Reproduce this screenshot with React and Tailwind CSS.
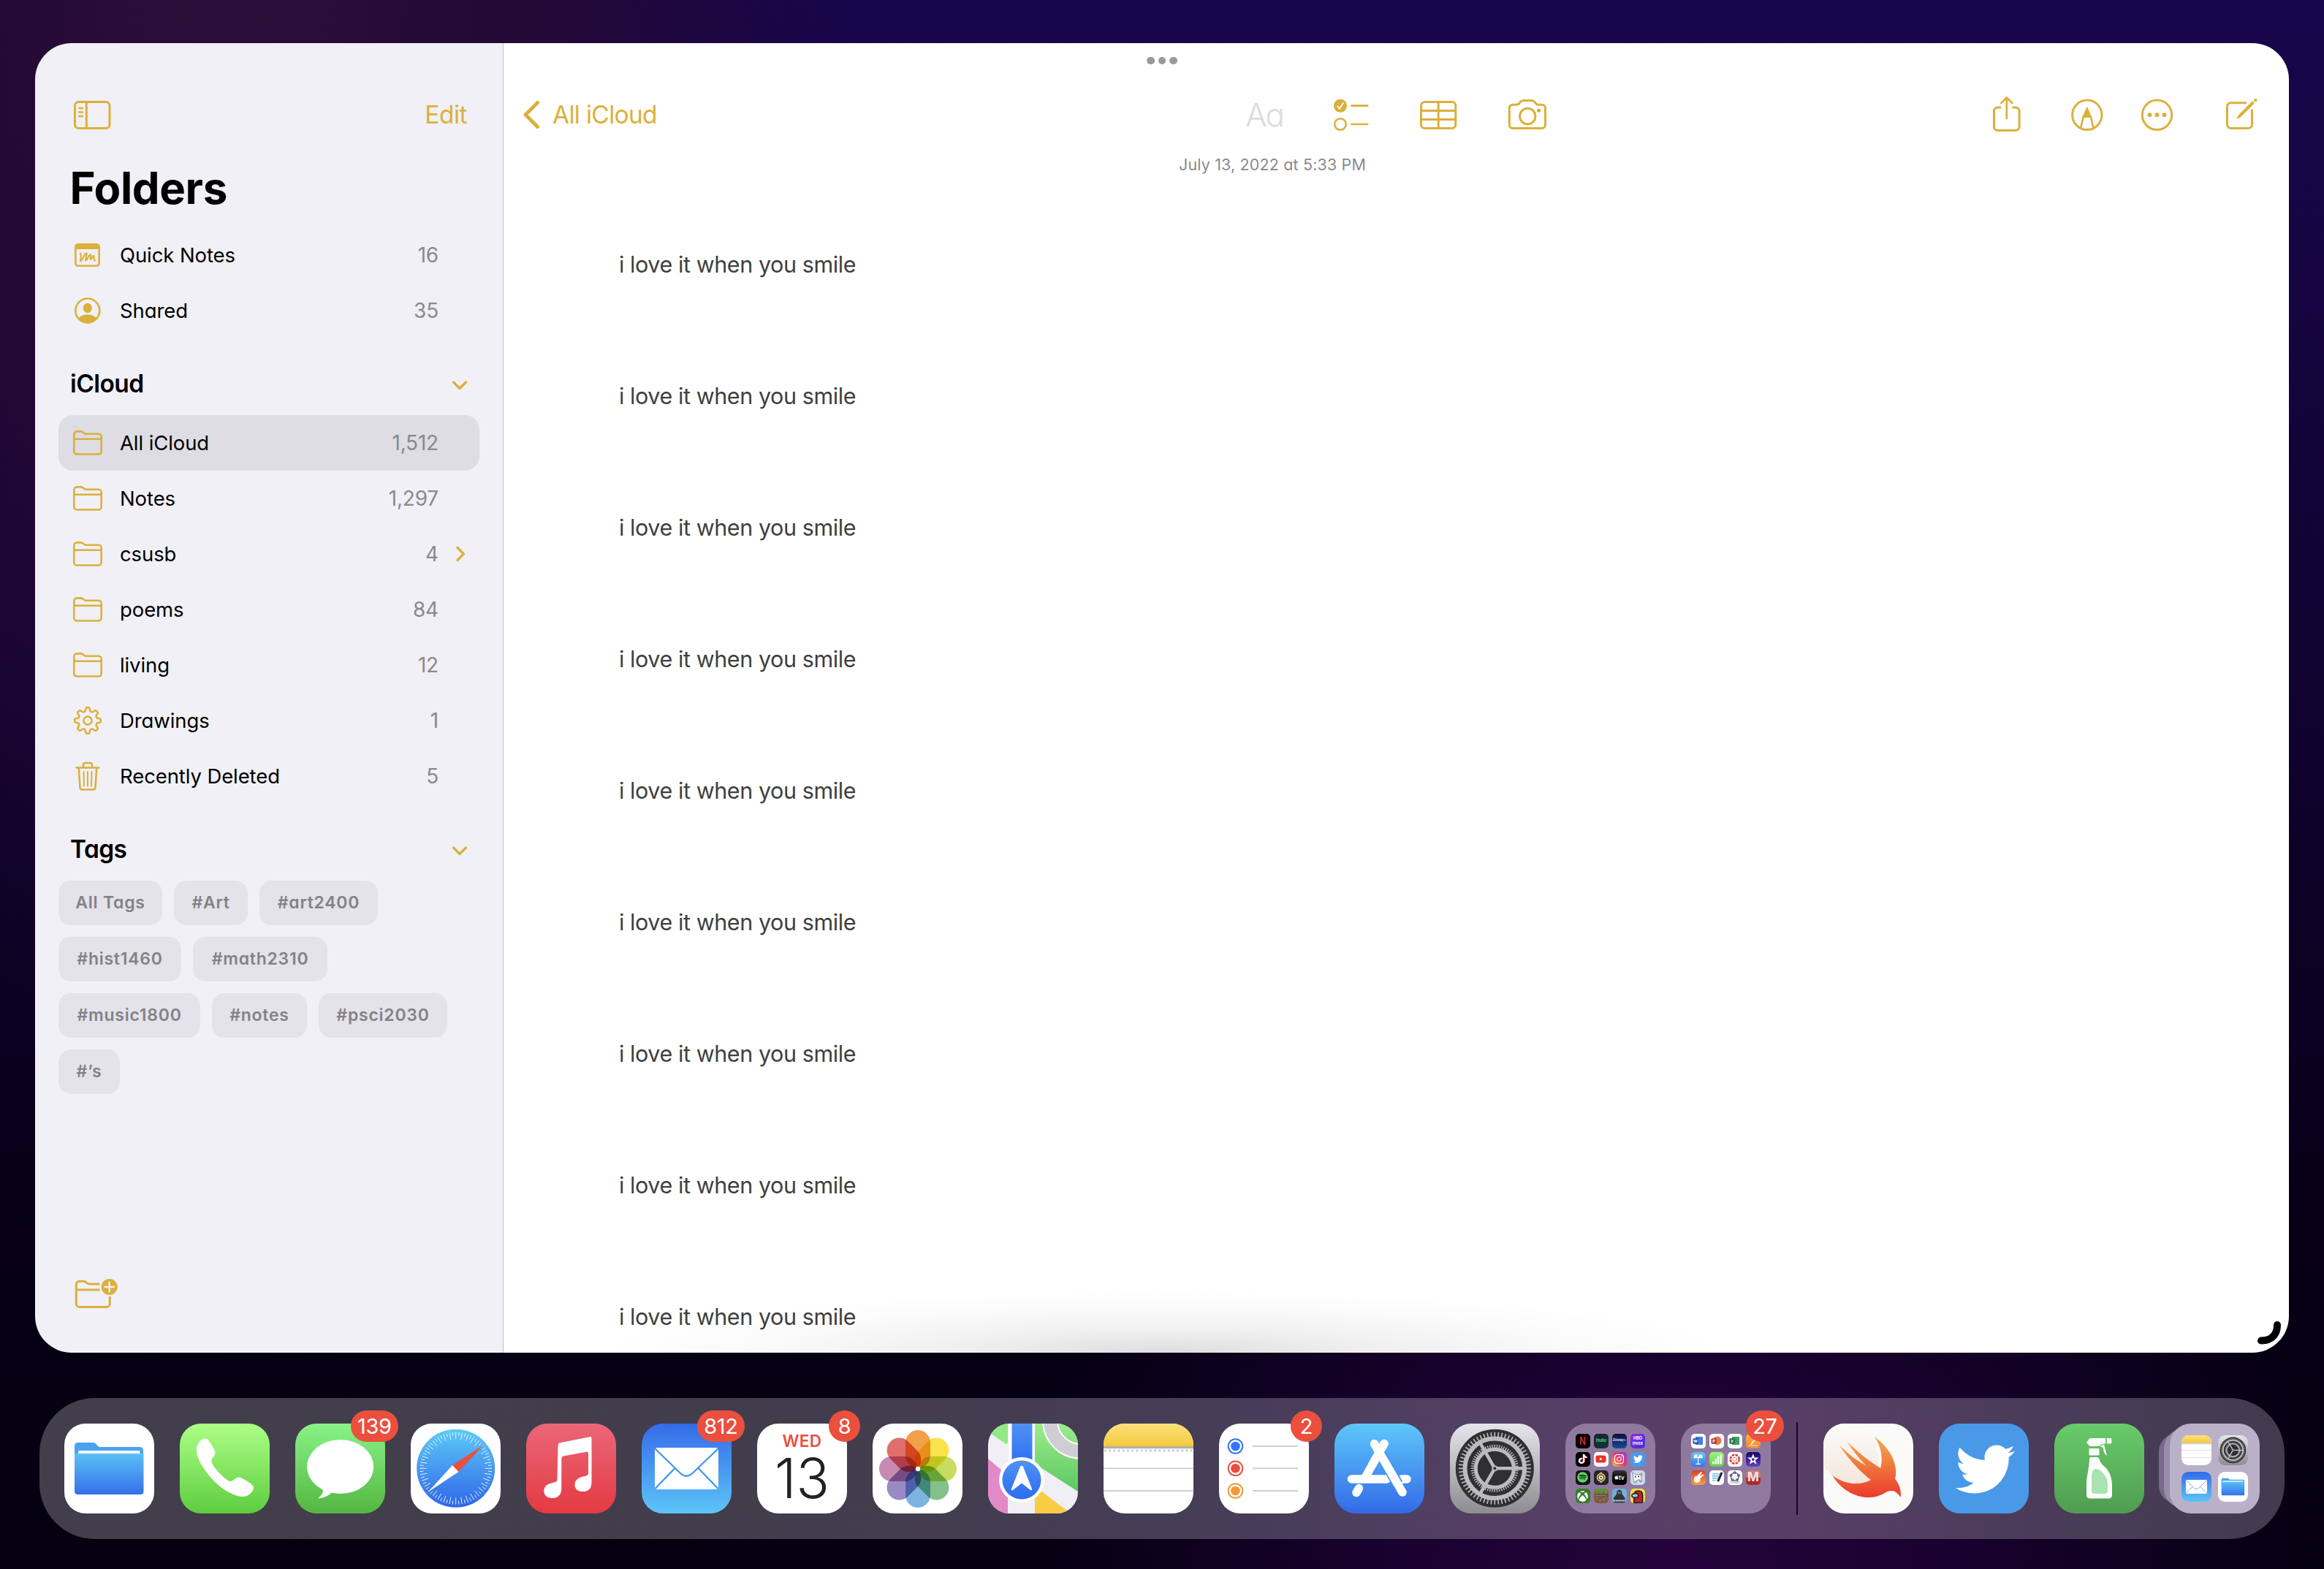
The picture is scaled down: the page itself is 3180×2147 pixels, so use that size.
import React from "react";
import { FaTwitter, FaTiktok, FaYoutube, FaInstagram, FaSpotify, FaXbox, FaApple } from "react-icons/fa";

const GOLD = "#dbb03b";

/* ---------- sidebar glyphs ---------- */

const FolderIcon = () => (
  <svg viewBox="0 0 44 38" className="h-[38px] w-[44px]" fill="none" stroke={GOLD} strokeWidth="2.6" strokeLinejoin="round">
    <path d="M3.3 30.5V7.4a4 4 0 0 1 4-4h5.2c1.6 0 2.4.4 3.5 1.5 1.200 1.300 2 1.900 3.700 1.900h17a4 4 0 0 1 4 4v19.700a4 4 0 0 1-4 4H7.300a4 4 0 0 1-4-4Z" />
    <path d="M3.300 13.700h37.400" />
  </svg>
);

const QuickNoteIcon = () => (
  <svg viewBox="0 0 44 38" className="h-[38px] w-[44px]" fill="none" stroke={GOLD} strokeWidth="2.600" strokeLinecap="round" strokeLinejoin="round">
    <rect x="5.300" y="4.300" width="32.400" height="29.500" rx="3.500" />
    <path d="M5 11V7a3 3 0 0 1 3-3h27a3 3 0 0 1 3 3v4Z" fill={GOLD} stroke="none" />
    <path d="M12 16.500C13.500 19 12.500 24 12.200 27.500C15 26 17 17.500 20.500 16.300C21.500 18 18.500 25 19.200 26.800C21.500 26 23 18.800 26 18.300C27 19.500 24.800 23.500 25.800 25C27.500 25 28.500 20.500 30.300 19.800C31 21.500 29.500 26.800 32.500 26.500" strokeWidth="2.100" />
  </svg>
);

const SharedIcon = () => (
  <svg viewBox="0 0 44 38" className="h-[38px] w-[44px]" fill="none">
    <circle cx="21.800" cy="19" r="16.500" stroke={GOLD} strokeWidth="2.600" />
    <ellipse cx="21.800" cy="15.500" rx="6" ry="6.700" fill={GOLD} />
    <path d="M9.500 30c2.500-4 7-5.400 12.300-5.400S31.600 26 34.100 30a16.500 16.500 0 0 1-24.600 0Z" fill={GOLD} />
  </svg>
);

const gearPath = (() => {
  const pts = [];
  const n = 96;
  for (let i = 0; i < n; i++) {
    const a = (i / n) * Math.PI * 2;
    const w = Math.cos(a * 8);
    const r = 15.4 + 2.500 * Math.tanh(w * 2.600);
    pts.push(`${(22 + r * Math.sin(a)).toFixed(2)} ${(20 - r * Math.cos(a)).toFixed(2)}`);
  }
  return "M" + pts.join("L") + "Z";
})();

const GearIcon = () => (
  <svg viewBox="0 0 44 40" className="h-[40px] w-[44px]" fill="none" stroke={GOLD} strokeWidth="2.500" strokeLinejoin="round">
    <path d={gearPath} />
    <circle cx="22" cy="20" r="5.600" />
  </svg>
);

const TrashIcon = () => (
  <svg viewBox="0 0 44 42" className="h-[42px] w-[44px]" fill="none" stroke={GOLD} strokeWidth="2.600" strokeLinecap="round" strokeLinejoin="round">
    <path d="M6.500 9.500h31M16 9V5.500a2.500 2.500 0 0 1 2.500-2.500h7A2.500 2.500 0 0 1 28 5.500V9" />
    <path d="M9.800 10l1.700 26.500a3 3 0 0 0 3 3h15a3 3 0 0 0 3-3L34.200 10" />
    <path d="M16.500 15l.5 19.500M22 15v19.500M27.500 15l-.5 19.500" strokeWidth="2" />
  </svg>
);

const SidebarToggle = () => (
  <svg viewBox="96 127 60 60" className="h-[60px] w-[60px]" fill="none" stroke={GOLD} strokeWidth="3" strokeLinecap="round">
    <rect x="102.500" y="139.500" width="47.500" height="36" rx="5" />
    <path d="M118.300 140v35" strokeLinecap="butt" />
    <path d="M108 148h5.200M108 153.500h5.200M108 159h5.200" strokeWidth="2.300" />
  </svg>
);

const ChevronDown = () => (
  <svg viewBox="0 0 24 16" className="h-[16px] w-[24px]" fill="none" stroke={GOLD} strokeWidth="3.200" strokeLinecap="round" strokeLinejoin="round">
    <path d="M3.500 4l8.500 8.500L20.500 4" />
  </svg>
);

const ChevronRight = () => (
  <svg viewBox="0 0 16 24" className="h-[24px] w-[16px]" fill="none" stroke={GOLD} strokeWidth="3.200" strokeLinecap="round" strokeLinejoin="round">
    <path d="M4 3.500l8.500 8.500L4 20.500" />
  </svg>
);

const NewFolderIcon = () => (
  <svg viewBox="98 1744 68 52" className="h-[52px] w-[68px]" fill="none" stroke={GOLD} strokeWidth="3" strokeLinejoin="round">
    <path d="M136.500 1757h-14c-1.800 0-2.800-.6-4-1.800-1.400-1.400-2.400-2-4.200-2h-5.500a4.500 4.500 0 0 0-4.500 4.500v26.300a4.500 4.500 0 0 0 4.500 4.500h37a4.500 4.500 0 0 0 4.500-4.500V1774" />
    <path d="M104.500 1765h32" />
    <circle cx="149.700" cy="1761" r="11" fill={GOLD} stroke="none" />
    <path d="M149.700 1754.800v12.400M143.500 1761h12.400" stroke="#f1f0f6" strokeWidth="2.500" strokeLinecap="round" />
  </svg>
);

/* ---------- toolbar glyphs ---------- */

const tool = { fill: "none", stroke: GOLD, strokeWidth: 3, strokeLinecap: "round", strokeLinejoin: "round" };

const BackChevron = () => (
  <svg viewBox="712 127 30 60" className="ml-[23px] h-[60px] w-[30px]" {...tool} strokeWidth="5">
    <path d="M735.500 140.500L719 157l16.500 16.500" />
  </svg>
);

const ChecklistIcon = () => (
  <svg viewBox="1820 127 60 60" className="ml-[60px] h-[60px] w-[60px]" {...tool}>
    <circle cx="1834" cy="144.700" r="9.100" fill={GOLD} stroke="none" />
    <path d="M1830.300 145.500l2.700 3.200 4.800-7.500" stroke="#fff" strokeWidth="1.900" />
    <circle cx="1834" cy="170" r="7.800" strokeWidth="2.600" />
    <path d="M1849.300 144.700h22M1849.300 170h22" strokeWidth="2.700" />
  </svg>
);

const TableIcon = () => (
  <svg viewBox="1938 127 60 60" className="ml-[58px] h-[60px] w-[60px]" {...tool}>
    <rect x="1944.500" y="139.500" width="47.300" height="36" rx="5" />
    <path d="M1945 151.500h46.500M1945 163.500h46.500M1968.200 140v35" />
  </svg>
);

const CameraIcon = () => (
  <svg viewBox="2058 127 64 60" className="ml-[60px] h-[60px] w-[64px]" {...tool}>
    <path d="M2065.300 148a4.800 4.800 0 0 1 4.800-4.800h5.200c1.700 0 2.700-.6 3.800-2l1.300-1.700c1.100-1.400 2.200-2 4-2h11.400c1.800 0 2.900.6 4 2l1.300 1.700c1.100 1.400 2.100 2 3.800 2h4.800a4.800 4.800 0 0 1 4.800 4.800v22.700a4.800 4.800 0 0 1-4.800 4.800h-39.600a4.800 4.800 0 0 1-4.800-4.800Z" />
    <circle cx="2090.200" cy="159" r="10.700" />
    <circle cx="2105.500" cy="151.200" r="2.600" fill={GOLD} stroke="none" />
  </svg>
);

const ShareIcon = () => (
  <svg viewBox="2720 127 52 60" className="ml-[598px] h-[60px] w-[52px]" {...tool}>
    <path d="M2738 147h-4.500a5 5 0 0 0-5 5v21.500a5 5 0 0 0 5 5h24.600a5 5 0 0 0 5-5V152a5 5 0 0 0-5-5h-4.600" strokeLinecap="butt" />
    <path d="M2745.800 162v-28M2738.300 141l7.500-7.500 7.500 7.500" strokeWidth="2.700" />
  </svg>
);

const MarkupIcon = () => (
  <svg viewBox="2830 127 52 60" className="ml-[58px] h-[60px] w-[52px]" {...tool}>
    <circle cx="2855.800" cy="157.300" r="20.200" />
    <path d="M2855.800 147.500l-5.500 12.500h11Z" fill={GOLD} strokeWidth="1.800" />
    <path d="M2850.500 160l-3.300 15M2861 160l3.300 15" strokeWidth="2.600" />
  </svg>
);

const MoreIcon = () => (
  <svg viewBox="2925 127 52 60" className="ml-[43px] h-[60px] w-[52px]" {...tool}>
    <circle cx="2951.500" cy="157.300" r="20.200" />
    <g fill={GOLD} stroke="none">
      <circle cx="2941.500" cy="157.300" r="3" />
      <circle cx="2951.500" cy="157.300" r="3" />
      <circle cx="2961.500" cy="157.300" r="3" />
    </g>
  </svg>
);

const ComposeIcon = () => (
  <svg viewBox="3040 127 54 60" className="ml-[63px] h-[60px] w-[54px]" {...tool}>
    <path d="M3074 140.700h-21.500a5 5 0 0 0-5 5v24.800a5 5 0 0 0 5 5h24a5 5 0 0 0 5-5v-21" strokeLinecap="butt" />
    <path d="M3061 162.300l1.600-4.600 19.400-19.500 3 3-19.500 19.500Z" fill={GOLD} stroke="none" />
    <path d="M3061 162.300l3-1.600" strokeWidth="1.200" />
    <circle cx="3086.200" cy="137.200" r="2.200" fill={GOLD} stroke="none" />
  </svg>
);

/* ---------- dock icons ---------- */

const ring = (n, r1, r2, cx, cy, extra) =>
  Array.from({ length: n }, (_, i) => {
    const a = (i / n) * Math.PI * 2;
    const inner = extra && i % 2 ? r1 + extra : r1;
    return (
      <line
        key={i}
        x1={cx + inner * Math.sin(a)}
        y1={cy - inner * Math.cos(a)}
        x2={cx + r2 * Math.sin(a)}
        y2={cy - r2 * Math.cos(a)}
      />
    );
  });

const Svg = ({ children }) => (
  <svg viewBox="0 0 123 123" className="block h-full w-full">
    {children}
  </svg>
);

const Grad = ({ id, a, b }) => (
  <linearGradient id={id} x1="0" y1="0" x2="0" y2="1">
    <stop offset="0" stopColor={a} />
    <stop offset="1" stopColor={b} />
  </linearGradient>
);

const Files = () => (
  <Svg>
    <defs><Grad id="files" a="#5ac0f6" b="#3570e8" /></defs>
    <rect width="123" height="123" fill="#fff" />
    <path d="M14 60V31q0-5 5-5h20q3 0 4.500 2l2.500 3q1 1 3 1h54q5 0 5 5v25Z" fill="#4ba3ef" />
    <rect x="19" y="37" width="84.500" height="6" rx="2" fill="#fff" />
    <path d="M14 41h94.500v51.500q0 4.500-4.500 4.500H18.500q-4.500 0-4.500-4.500Z" fill="url(#files)" />
    <path d="M19 41h84.500" stroke="#a9d9f8" strokeWidth="1.200" />
  </Svg>
);

const Phone = () => (
  <Svg>
    <defs><Grad id="phone" a="#acfe86" b="#5ecd3f" /></defs>
    <rect width="123" height="123" fill="url(#phone)" />
    <path d="M38 21.500C42 26 46 33 48.200 38C50 44 42.500 47 43.300 52.500C46 60 58 73 67 78.500C72.500 81 76 72.500 82 73.500C88 76 97 81 100.500 85.500C103 91 95 99 88.500 99.800C80 101 66 95 55 86C38 72 23 50 22.800 36C23 27 31 17 38 21.500Z" fill="#fff" />
  </Svg>
);

const Messages = () => (
  <Svg>
    <defs><Grad id="msg" a="#88f388" b="#55b641" /></defs>
    <rect width="123" height="123" fill="url(#msg)" />
    <ellipse cx="61.700" cy="59" rx="45.500" ry="37" fill="#fff" />
    <path d="M36 87c3 4 3 8.500-4 14.300 0 1 .5 1.200 2 .9 7-1.200 11-3.700 15.500-7.200Z" fill="#fff" />
  </Svg>
);

const Safari = () => (
  <Svg>
    <defs><Grad id="saf" a="#5dcaf8" b="#2f66e8" /></defs>
    <rect width="123" height="123" fill="#fff" />
    <circle cx="61.700" cy="61.300" r="53.500" fill="url(#saf)" />
    <g stroke="#e8f4fd" strokeWidth="1">{ring(72, 40, 49.500, 61.700, 61.300, 4.500)}</g>
    <path d="M99.500 29.500L57 57l8.500 9Z" fill="#eb4f3e" />
    <path d="M24 93.500L57 57l8.500 9Z" fill="#fff" />
  </Svg>
);

const Music = () => (
  <Svg>
    <defs><Grad id="mus" a="#ea6778" b="#e43a42" /></defs>
    <rect width="123" height="123" fill="url(#mus)" />
    <path d="M43.500 30q0-3 3-3.700L87 18.200q2.500-.5 2.500 2V80c0 9-4 12.500-11 13-7 .5-12-3-12-9 0-7 5-10 11-11.500 5-1 7.500-1.500 7.500-5V41q0-3-3-2.300l-31 5.800q-2.700.6-2.700 3V88c0 9.500-4.500 13.500-12 14-7 .3-12-3.500-12-9.500 0-7 5-10 11-11.300 5-1 7.200-1.700 7.200-5.200Z" fill="#fff" />
  </Svg>
);

const Mail = () => (
  <Svg>
    <defs><Grad id="mail" a="#346be8" b="#5dc5f8" /></defs>
    <rect width="123" height="123" fill="url(#mail)" />
    <rect x="18" y="33" width="87" height="57" rx="4" fill="#fff" />
    <g fill="none" stroke="#4596f0" strokeWidth="2.300">
      <path d="M18.500 34.500l34.500 33.500q8 7.500 16.500 0L104.500 34.500" />
      <path d="M19 88.500L45.500 61M104 88.500L77.500 61" />
    </g>
  </Svg>
);

const Calendar = () => (
  <div className="flex h-full w-full flex-col items-center bg-white">
    <div className="mt-[10px] h-[28px] text-[22.500px] leading-[28px] font-semibold tracking-[0.4px] text-[#ea4f45]">WED</div>
    <div className="mt-[3px] h-[68px] text-[75px] leading-[68px] font-light text-[#222]">13</div>
  </div>
);

const petals = ["#f0a14a", "#f8e34b", "#c8dc62", "#84c08c", "#7db3df", "#9a8ac3", "#c78ab2", "#e26e6c"];
const Photos = () => (
  <Svg>
    <rect width="123" height="123" fill="#fff" />
    {petals.map((c, i) => (
      <rect key={c} x="45" y="9" width="34" height="52" rx="17" fill={c} className="mix-blend-multiply" transform={`rotate(${i * 45} 62 62)`} />
    ))}
    <circle cx="62" cy="62" r="3.200" fill="#fff" />
  </Svg>
);

const Maps = () => (
  <Svg>
    <defs>
      <Grad id="mapg" a="#9dec8b" b="#5cc861" />
      <Grad id="mapb" a="#4f92f2" b="#2b6cf3" />
    </defs>
    <rect width="123" height="123" fill="#f0eff5" />
    <path d="M0 0h27v24q0 6-4 3L0 11Z" fill="#94e885" />
    <path d="M64 0h59v93L64 55Z" fill="url(#mapg)" />
    <circle cx="127" cy="-4" r="42" fill="none" stroke="#fff" strokeWidth="22" />
    <circle cx="127" cy="-4" r="42" fill="none" stroke="#cfced4" strokeWidth="18" />
    <rect x="28.500" width="35" height="60" fill="#fff" />
    <rect x="32.500" width="28" height="60" fill="url(#mapb)" />
    <path d="M0 48l27 23v52H0Z" fill="#e289c7" />
    <path d="M64 86l44 33-4 4H64Z" fill="#f6cd45" />
    <circle cx="46" cy="77" r="31" fill="#fff" />
    <circle cx="46" cy="77" r="26.500" fill="url(#mapb)" />
    <path d="M46 57.500c1.200 0 1.800.8 2.300 2.200L60 89c.6 2-.8 3-2.300 1.800L46 81.500 34.300 90.800C32.800 92 31.400 91 32 89l11.700-29.300c.5-1.400 1.100-2.200 2.300-2.200Z" fill="#fff" />
  </Svg>
);

const Notes = () => (
  <Svg>
    <defs><Grad id="note" a="#fbe17c" b="#f5c93d" /></defs>
    <rect width="123" height="123" fill="#fff" />
    <rect width="123" height="31" fill="url(#note)" />
    <rect y="31" width="123" height="3.200" fill="#b3b0a9" />
    <path d="M1 37h122" stroke="#c9c9ce" strokeWidth="2.800" strokeDasharray="2.800 3.400" />
    <path d="M0 61.300h123M0 92h123" stroke="#cfced4" strokeWidth="1.800" />
  </Svg>
);

const Reminders = () => (
  <Svg>
    <rect width="123" height="123" fill="#fff" />
    {[["#3478f6", 31], ["#eb4e3d", 61.300], ["#f19a37", 92]].map(([c, y]) => (
      <g key={c}>
        <circle cx="22.500" cy={y} r="9.800" fill="none" stroke={c} strokeWidth="2" />
        <circle cx="22.500" cy={y} r="6.300" fill={c} />
        <path d={`M46 ${y}H108`} stroke="#cfced4" strokeWidth="2" />
      </g>
    ))}
  </Svg>
);

const AppStore = () => (
  <Svg>
    <defs><Grad id="as" a="#5ec7f9" b="#336ae8" /></defs>
    <rect width="123" height="123" fill="url(#as)" />
    <g stroke="#fff" strokeWidth="11.500" strokeLinecap="round" fill="none">
      <path d="M68 27.500L41 75.500M33.500 88.500L30 94.500" />
      <path d="M23.500 76h48M92 76h7" />
    </g>
    <path d="M55 27.500L93 94" stroke="#4a97f1" strokeWidth="15" strokeLinecap="butt" fill="none" strokeDasharray="50 100" strokeDashoffset="-14" />
    <path d="M54.500 27.500L93 94" stroke="#fff" strokeWidth="11.500" strokeLinecap="round" />
    <path d="M68 27.500L52 56" stroke="#fff" strokeWidth="11.500" strokeLinecap="round" />
  </Svg>
);

const Settings = () => (
  <Svg>
    <defs><Grad id="set" a="#e5e5ea" b="#8d8d91" /></defs>
    <rect width="123" height="123" fill="url(#set)" />
    <circle cx="61.300" cy="61.300" r="53.500" fill="#303032" />
    <circle cx="61.300" cy="61.300" r="40.800" fill="none" stroke="#bcbcc0" strokeWidth="6" />
    <g stroke="#bcbcc0" strokeWidth="1.700">{ring(60, 42, 49.500, 61.300, 61.300)}</g>
    <circle cx="61.300" cy="61.300" r="26" fill="none" stroke="#bcbcc0" strokeWidth="5" />
    <g stroke="#bcbcc0" strokeWidth="1.400">{ring(60, 27, 32.500, 61.300, 61.300)}</g>
    <g stroke="#bcbcc0" strokeWidth="4.500">
      <path d="M61.300 61.300H101M61.300 61.300L41.500 27M61.300 61.300L41.500 95.600" />
    </g>
    <circle cx="61.300" cy="61.300" r="4" fill="#bcbcc0" />
    <circle cx="61.300" cy="61.300" r="2" fill="#303032" />
  </Svg>
);

const Swift = () => (
  <Svg>
    <defs>
      <Grad id="sw" a="#f2b04d" b="#eb3a2c" />
      <Grad id="swb" a="#fdfbfa" b="#f3e7dd" />
    </defs>
    <rect width="123" height="123" fill="#fafaf9" />
    <path d="M0 0h52l18 18L78 61 65 77C50 86 30 84 12 71L0 58Z" fill="url(#swb)" />
    <path d="M70 18C92 34 103 56 98 76C104 82 107 93 105.500 101C101 92 92 89 84 95C75 100 68 101 62 101C41 101 22 88 12.400 71C30 84 50 85 65 77C50 66 34 48 21.400 29C33 41 46 51 59 58C50 49 40 37 32.500 25C46 38 62 51 78 61C82 47 79 32 70 18Z" fill="url(#sw)" />
  </Svg>
);

const Twitter = () => (
  <div className="flex h-full w-full items-center justify-center bg-[#4a99e9] pt-[2px] pl-[3px]">
    <FaTwitter className="h-[81px] w-[81px] text-white" />
  </div>
);

const Spray = () => (
  <Svg>
    <defs><Grad id="spr" a="#69cb6b" b="#4f9c50" /></defs>
    <rect width="123" height="123" fill="url(#spr)" />
    <g fill="#fff">
      <path d="M44 26l4-5.500q.5-.5 1.500-.5H70v7.500q-6 0-8 3.500H48.500Z" />
      <rect x="71.800" y="20" width="6.500" height="7.500" rx="1" />
      <path d="M63 31l5-2.500 4 15.500q-5-3-5-10.500Z" />
      <rect x="47.500" y="34" width="14" height="9.500" rx="1" />
      <path d="M48 48q0-2 2-2h9q2 0 2.500 2.500c1 6 6 8.500 10.500 14 5 6.500 7 13.500 7 23v12q0 5-5 5H49q-5 0-5-5V82c0-10 4-22 4-34Z" />
    </g>
    <path d="M51 74c0-8 2-12 6-12 5 0 16 9 16 21v9q0 4-4 4H55q-4 0-4-4Z" fill="#a9e4b0" />
  </Svg>
);

/* Tiny tiles shown inside folders */
const Tile = ({ className, children }) => (
  <div className={`flex h-[19.500px] w-[19.500px] items-center justify-center overflow-hidden rounded-[5px] ${className}`}>{children}</div>
);

const Mini = ({ children }) => (
  <svg viewBox="0 0 20 20" className="h-full w-full">
    {children}
  </svg>
);

const Office = ({ letter, a, b, round }) => (
  <Tile className="bg-white">
    <Mini>
      {round ? <circle cx="11" cy="9.700" r="6" fill={b} /> : <rect x="6" y="4" width="10.500" height="11.500" rx="1" fill={b} />}
      <rect x="2.500" y="6.500" width="7.500" height="7.500" rx="1" fill={a} />
      <text x="6.250" y="12.300" fontSize="5.500" fontWeight="700" textAnchor="middle" fill="#fff">{letter}</text>
    </Mini>
  </Tile>
);

const Entertainment = () => (
  <div className="grid h-full w-full grid-cols-[repeat(4,19.500px)] content-start gap-[5.600px] bg-[#8f799f] p-[14px]">
    <Tile className="bg-black"><span className="scale-x-75 text-[15px] font-bold text-[#d9222a]">N</span></Tile>
    <Tile className="bg-linear-to-br from-[#16202c] to-[#0f3a3a]"><span className="text-[6.500px] font-bold text-[#3ddc84]">hulu</span></Tile>
    <Tile className="bg-linear-to-b from-[#0b0f3c] to-[#1a4a9c]"><span className="text-[4.500px] font-semibold text-white italic">Disney+</span></Tile>
    <Tile className="flex-col bg-linear-to-br from-[#8b2be0] to-[#3c2bd8] text-center text-white">
      <span className="text-[5.500px] leading-[6px] font-bold">HBO</span>
      <span className="text-[7px] leading-[7px] font-semibold">max</span>
    </Tile>
    <Tile className="bg-black"><FaTiktok className="h-[13px] w-[13px] text-white drop-shadow-[1px_0_0_#e8405a]" /></Tile>
    <Tile className="bg-white"><FaYoutube className="h-[15px] w-[15px] text-[#ea3323]" /></Tile>
    <Tile className="bg-linear-to-tr from-[#f9b13a] via-[#e8306a] to-[#8a2fd6]"><FaInstagram className="h-[15px] w-[15px] text-white" /></Tile>
    <Tile className="bg-[#4a99e9]"><FaTwitter className="h-[13px] w-[13px] text-white" /></Tile>
    <Tile className="bg-[#151515]"><FaSpotify className="h-[15px] w-[15px] text-[#5fd36a]" /></Tile>
    <Tile className="bg-[#23262b]">
      <Mini>
        <circle cx="10" cy="10" r="5.300" fill="none" stroke="#f0c26a" strokeWidth="1.800" />
        <circle cx="10" cy="10" r="3.200" fill="#fff" />
        <circle cx="10" cy="10" r="1.300" fill="#333" />
        <path d="M10 2.500v2.500M10 15v2.500" stroke="#f0b23a" strokeWidth="2.500" />
      </Mini>
    </Tile>
    <Tile className="bg-linear-to-b from-[#333] to-black text-white">
      <FaApple className="h-[7px] w-[6px]" /><span className="text-[8px] font-semibold">tv</span>
    </Tile>
    <Tile className="bg-[#c8daf2]">
      <Mini>
        <path d="M3 3l4 3h5l4-2-1 6 1 6h-3l-1-3-3 1-1 3H5l-1-6Z" fill="#f7f7fa" stroke="#6a6a78" strokeWidth=".7" />
        <circle cx="7" cy="9" r="1" fill="#333" /><circle cx="11.500" cy="8.500" r="1" fill="#333" />
        <path d="M14 5l1 3M6 15l2 1M13 13l2 3" stroke="#b5483c" strokeWidth="1" />
      </Mini>
    </Tile>
    <Tile className="bg-[#357d2b]"><FaXbox className="h-[15px] w-[15px] text-white" /></Tile>
    <Tile className="bg-[#7d5a41]">
      <Mini>
        <path d="M0 0h20v5h-2v2h-3V5h-3v3H9V5H6v2H3V5H0Z" fill="#5e8f38" />
        <path d="M3 12h2v2H3ZM12 14h3v2h-3ZM8 16h2v2H8ZM16 11h2v2h-2Z" fill="#a57c5c" />
        <rect x="1.500" y="8.500" width="17" height="3" fill="#4a4a4a" />
        <path d="M2.500 10h15" stroke="#b9b9b9" strokeWidth="1.200" strokeDasharray="1.500 .6" />
      </Mini>
    </Tile>
    <Tile className="bg-[#6fb1d8]">
      <Mini>
        <path d="M7 3q3-2.500 6 0l1 5 4 5v7H2v-7l4-5Z" fill="#30353c" />
        <path d="M8 4.500q2-1 4 0v3H8Z" fill="#6c737b" />
        <path d="M2 17h16" stroke="#e5e5e5" strokeWidth="2" strokeDasharray="2 .7" />
      </Mini>
    </Tile>
    <Tile className="bg-[#f5dc43]">
      <Mini>
        <path d="M5 20V9q0-6 6-6t6 6v11Z" fill="#b5282b" stroke="#1c1216" strokeWidth="1.600" />
        <rect x="2" y="7" width="9" height="5.500" rx="2.700" fill="#9cc7dc" stroke="#1c1216" strokeWidth="1.400" />
      </Mini>
    </Tile>
  </div>
);

const Productivity = () => (
  <div className="grid h-full w-full grid-cols-[repeat(4,19.500px)] content-start gap-[5.600px] bg-[#8f799f] p-[14px]">
    <Office letter="W" a="#2150a8" b="#3f82dc" />
    <Office letter="P" a="#b8412a" b="#e07a55" round />
    <Office letter="X" a="#1f6b41" b="#3fa068" />
    <Tile className="bg-linear-to-b from-[#f5b13d] to-[#ee8a3a]"><Mini><path d="M7 15L16 4" stroke="#fff" strokeWidth="1.600" /><path d="M4 16.500h12" stroke="#fff" strokeWidth=".9" /></Mini></Tile>
    <Tile className="bg-linear-to-b from-[#62c5f8] to-[#3577ea]"><Mini><path d="M4.500 3.500h11l1 5h-13Z" fill="#fff" /><path d="M10 8v8.500M6.500 16.800h7" stroke="#fff" strokeWidth="1.200" /><circle cx="10" cy="5.500" r="1.500" fill="#7fc26a" /></Mini></Tile>
    <Tile className="bg-linear-to-b from-[#9df57f] to-[#5fd048]"><Mini><path d="M5.200 17v-4M8.800 17V9.500M12.400 17V6M16 17V3.500" stroke="#fff" strokeWidth="2.400" /></Mini></Tile>
    <Tile className="bg-white"><Mini><circle cx="10" cy="10" r="6.200" fill="none" stroke="#d23a33" strokeWidth="2.600" strokeDasharray="3.600 1.270" /><circle cx="10" cy="10" r="2.800" fill="none" stroke="#d23a33" strokeWidth="1.200" strokeDasharray="1.200 1" /></Mini></Tile>
    <Tile className="bg-linear-to-b from-[#140a63] to-[#6a3cc0]"><Mini><path d="M10 2l2 5.600 6 .2-4.800 3.600 1.700 5.800L10 13.800l-4.900 3.400 1.700-5.800L2 7.800l6-.2Z" fill="#fff" /><circle cx="10" cy="10.300" r="1.900" fill="#3d22a0" /></Mini></Tile>
    <Tile className="bg-linear-to-b from-[#dc3b30] to-[#f2a044]"><Mini><path d="M7 9l7-7 1.500 1-4 5.500L17 5.500l.7 1.500-5.200 4.500c1 3-1 6-4.500 6S3.500 14.500 4 11l2-3Z" fill="#fff" /></Mini></Tile>
    <Tile className="bg-white"><Mini><path d="M4 5h11M4 8h9M4 11h8M4 14h5" stroke="#5cb9ea" strokeWidth="1.400" /><path d="M12 15.500L17.500 3" stroke="#222" strokeWidth="3" /></Mini></Tile>
    <Tile className="bg-white">
      <Mini>
        <circle cx="10" cy="8.800" r="5.600" fill="none" stroke="#555" strokeWidth="1.200" />
        <g fill="#6a66c9" stroke="#333" strokeWidth=".5">
          <circle cx="10" cy="3.200" r="1.700" /><circle cx="15.300" cy="7.200" r="1.700" /><circle cx="13.300" cy="13.400" r="1.700" /><circle cx="6.700" cy="13.400" r="1.700" /><circle cx="4.700" cy="7.200" r="1.700" />
        </g>
        <text x="10" y="18.800" fontSize="3.400" textAnchor="middle" fill="#666">CLASSIC</text>
      </Mini>
    </Tile>
    <Tile className="bg-linear-to-b from-[#d07672] from-50% to-[#b02a26] to-50%"><span className="text-[17px] leading-none font-bold text-[#f3e3e3]">M</span></Tile>
  </div>
);

const StackTile = ({ children }) => <div className="h-[41px] w-[41px] overflow-hidden rounded-[9.500px]">{children}</div>;

const AppLibrary = () => (
  <div className="relative h-[123px] w-[123px]">
    <div className="absolute top-[14px] -left-[15px] h-[95px] w-[95px] rounded-[24px] bg-[#78698c]" />
    <div className="absolute top-[7px] -left-[8px] h-[109px] w-[109px] rounded-[27px] bg-[#988bab]" />
    <div className="relative grid h-full w-full grid-cols-2 content-start gap-[8.500px] rounded-[29px] bg-[#bab1c9] p-[16.300px]">
      <StackTile><Notes /></StackTile>
      <StackTile><Settings /></StackTile>
      <StackTile><Mail /></StackTile>
      <StackTile><Files /></StackTile>
    </div>
  </div>
);

const DockApp = ({ icon: Icon, badge }) => (
  <div className="relative h-[123px] w-[123px]">
    <div className="isolate h-full w-full overflow-hidden rounded-[29px]">
      <Icon />
    </div>
    {badge && (
      <div className="absolute -top-[18px] -right-[18px] flex h-[43px] min-w-[43px] items-center justify-center rounded-full bg-[#eb4f3d] px-[9.500px] text-[29px] leading-none tracking-[-0.4px] text-white">
        {badge}
      </div>
    )}
  </div>
);

const mainApps = [
  { icon: Files },
  { icon: Phone },
  { icon: Messages, badge: "139" },
  { icon: Safari },
  { icon: Music },
  { icon: Mail, badge: "812" },
  { icon: Calendar, badge: "8" },
  { icon: Photos },
  { icon: Maps },
  { icon: Notes },
  { icon: Reminders, badge: "2" },
  { icon: AppStore },
  { icon: Settings },
  { icon: Entertainment },
  { icon: Productivity, badge: "27" },
];

const recentApps = [{ icon: Swift }, { icon: Twitter }, { icon: Spray }];

const Dock = () => (
  <div className="mt-[62px] ml-[54px] flex h-[193px] w-[3072px] items-center gap-[35px] rounded-[76px] bg-[linear-gradient(90deg,#423e4b_0%,#423d4c_35%,#463d57_52%,#563f66_68%,#573e66_78%,#4a3c59_89%,#433a4f_100%)] pl-[34px]">
    {mainApps.map((app, i) => (
      <DockApp key={i} {...app} />
    ))}
    <div className="h-[127px] w-[2px] bg-[#14052c]" />
    {recentApps.map((app, i) => (
      <DockApp key={i} {...app} />
    ))}
    <AppLibrary />
  </div>
);

/* ---------- sidebar ---------- */

const Row = ({ icon, label, count, selected, expandable }) => (
  <div className={`mx-[32px] flex h-[76px] items-center rounded-[20px] pr-[16px] pl-[18px] ${selected ? "bg-[#dedde3]" : ""}`}>
    <div className="flex w-[44px] justify-center">{icon}</div>
    <div className="ml-[22px] flex-1 pt-[1px] text-[27.500px] tracking-[-0.1px] text-black">{label}</div>
    <div className="text-[28px] tracking-[-0.2px] text-[#89898e]">{count}</div>
    <div className="flex w-[40px] justify-end pr-[2px]">{expandable && <ChevronRight />}</div>
  </div>
);

const SectionHeading = ({ children }) => (
  <div className="mt-[22px] mb-[3px] flex h-[80px] items-center justify-between pr-[47px] pl-[48px]">
    <div className="text-[33.500px] font-semibold tracking-[-0.6px] text-black">{children}</div>
    <div className="pt-[4px]"><ChevronDown /></div>
  </div>
);

const tags = [
  [["All Tags", "w-[142px]"], ["#Art", "w-[101px]"], ["#art2400", "w-[162px]"]],
  [["#hist1460", "w-[168px]"], ["#math2310", "w-[184px]"]],
  [["#music1800", "w-[194px]"], ["#notes", "w-[130px]"], ["#psci2030", "w-[176px]"]],
  [["#’s", "w-[84px]"]],
];

const Sidebar = () => (
  <div className="flex w-[641px] flex-col border-r border-[#c3c2c7] bg-[#f1f0f6]">
    <div className="mt-[68px] flex h-[60px] items-center justify-between pr-[49px] pl-[48px]">
      <SidebarToggle />
      <div className="text-[33.500px] tracking-[-0.5px] text-[#dbb03b]">Edit</div>
    </div>
    <div className="mt-[32px] mb-[16px] h-[76px] pl-[47.500px] text-[60px] leading-[76px] font-bold tracking-[-0.4px] text-black">Folders</div>
    <Row icon={<QuickNoteIcon />} label="Quick Notes" count="16" />
    <Row icon={<SharedIcon />} label="Shared" count="35" />
    <SectionHeading>iCloud</SectionHeading>
    <Row icon={<FolderIcon />} label="All iCloud" count="1,512" selected />
    <Row icon={<FolderIcon />} label="Notes" count="1,297" />
    <Row icon={<FolderIcon />} label="csusb" count="4" expandable />
    <Row icon={<FolderIcon />} label="poems" count="84" />
    <Row icon={<FolderIcon />} label="living" count="12" />
    <Row icon={<GearIcon />} label="Drawings" count="1" />
    <Row icon={<TrashIcon />} label="Recently Deleted" count="5" />
    <SectionHeading>Tags</SectionHeading>
    <div className="ml-[32px] flex flex-col gap-[16px]">
      {tags.map((line, i) => (
        <div key={i} className="flex gap-[16px]">
          {line.map(([name, width]) => (
            <div key={name} className={`flex h-[61px] items-center justify-center rounded-[17px] bg-[#e4e3e9] text-[23px] font-semibold tracking-[0.75px] text-[#838287] ${width}`}>
              {name}
            </div>
          ))}
        </div>
      ))}
    </div>
    <div className="mt-auto mb-[55px] ml-[50px]"><NewFolderIcon /></div>
  </div>
);

/* ---------- editor ---------- */

const Editor = () => (
  <div className="flex flex-1 flex-col overflow-hidden bg-[radial-gradient(ellipse_780px_85px_at_37%_100%,#dedede_0%,#efefef_35%,#fafafa_70%,#fff_100%)]">
    <div className="mt-[68px] flex h-[60px] shrink-0 items-center">
      <BackChevron />
      <div className="ml-[14px] w-[150px] text-[33.500px] tracking-[-0.7px] whitespace-nowrap text-[#dbb03b]">All iCloud</div>
      <div className="ml-[798px] w-[56px] text-[44px] leading-[60px] font-light tracking-[-2px] text-[#dcdcdc]">Aa</div>
      <ChecklistIcon />
      <TableIcon />
      <CameraIcon />
      <ShareIcon />
      <MarkupIcon />
      <MoreIcon />
      <ComposeIcon />
    </div>
    <div className="mt-[22px] mb-[30px] ml-[860px] h-[32px] w-[384px] shrink-0 text-center text-[21.500px] leading-[32px] tracking-[0.15px] text-[#8a8a8e]">
      July 13, 2022 at 5:33 PM
    </div>
    {Array.from({ length: 9 }, (_, i) => (
      <div key={i} className="flex h-[180px] shrink-0 items-center pt-[1px] pl-[158px] text-[30.500px] tracking-[-0.42px] text-[#3f3f3f]">
        i love it when you smile
      </div>
    ))}
  </div>
);

export default function App() {
  return (
    <div className="h-[2147px] w-[3180px] overflow-hidden bg-[radial-gradient(ellipse_900px_700px_at_72%_100%,#24033a_0%,#1a0230_40%,transparent_100%),radial-gradient(ellipse_860px_1500px_at_10%_-2%,#2d0e3a_0%,#230934_45%,transparent_100%),linear-gradient(180deg,#18054c_0%,#170442_16%,#11022f_45%,#070016_80%,#05000f_100%)] pt-[59px] font-['Inter','Liberation_Sans',sans-serif] [font-feature-settings:'cv11']">
      <div className="relative ml-[48px] flex h-[1792px] w-[3084px] overflow-hidden rounded-[50px]">
        <Sidebar />
        <Editor />
        <div className="absolute top-[18.500px] left-1/2 flex -translate-x-1/2 gap-[5px]">
          <div className="h-[10.600px] w-[10.600px] rounded-full bg-[#999]" />
          <div className="h-[10.600px] w-[10.600px] rounded-full bg-[#999]" />
          <div className="h-[10.600px] w-[10.600px] rounded-full bg-[#999]" />
        </div>
        <svg viewBox="3080 1800 44 44" className="absolute right-[8px] bottom-[7px] h-[44px] w-[44px]" fill="none" stroke="#000" strokeWidth="10" strokeLinecap="round">
          <path d="M3116 1813c0 13-7 21.500-22 21.500" />
        </svg>
      </div>
      <Dock />
    </div>
  );
}
